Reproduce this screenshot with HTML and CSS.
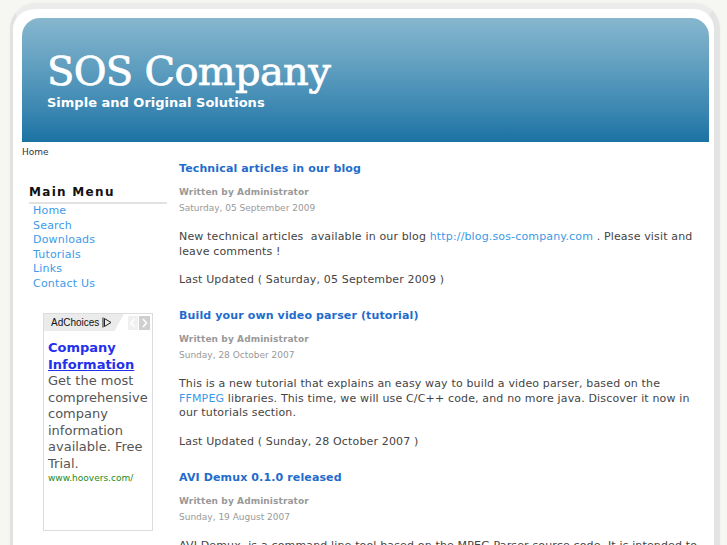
FILE: index.html
```html
<!DOCTYPE html>
<html lang="en">
<head>
<meta charset="utf-8">
<title>SOS Company</title>
<link rel="stylesheet" href="styles.css">
</head>
<body>
<div class="page">
  <div class="header">
    <div class="site-title">SOS Company</div>
    <div class="site-slogan">Simple and Original Solutions</div>
  </div>
  <div class="breadcrumb">Home</div>
  <div class="columns">
    <aside class="left">
      <div class="module">
        <h3 class="module-title">Main Menu</h3>
        <ul class="menu">
          <li><a href="#">Home</a></li>
          <li><a href="#">Search</a></li>
          <li><a href="#">Downloads</a></li>
          <li><a href="#">Tutorials</a></li>
          <li><a href="#">Links</a></li>
          <li><a href="#">Contact Us</a></li>
        </ul>
      </div>
      <div class="ad">
        <div class="ad-bar">
          <span class="adchoices">AdChoices
            <svg class="ad-icon" width="10" height="11" viewBox="0 0 10 11"><path d="M1 0.5v10M2.5 1.5l6.5 4-6.5 4z" fill="none" stroke="#222" stroke-width="1"/></svg>
          </span>
          <span class="ad-arrow ad-prev"><svg width="10" height="14" viewBox="0 0 10 14"><path d="M6.5 3L3 7l3.5 4" fill="none" stroke="#fff" stroke-width="1.6"/></svg></span>
          <span class="ad-arrow ad-next"><svg width="11" height="14" viewBox="0 0 11 14"><path d="M4 3l3.5 4L4 11" fill="none" stroke="#fff" stroke-width="1.6"/></svg></span>
        </div>
        <div class="ad-body">
          <a class="ad-link" href="#">Company <span class="ad-u">Information</span></a>
          <p class="ad-text">Get the most comprehensive company information available. Free Trial.</p>
          <div class="ad-url">www.hoovers.com/</div>
        </div>
      </div>
    </aside>
    <main class="main">
      <div class="article">
        <h2 class="article-title">Technical articles in our blog</h2>
        <div class="author">Written by Administrator</div>
        <div class="date">Saturday, 05 September 2009</div>
        <p class="text">New technical articles&nbsp; available in our blog <a href="#">http://blog.sos-company.com</a> . Please visit and leave comments !</p>
        <p class="updated">Last Updated ( Saturday, 05 September 2009 )</p>
      </div>
      <div class="article">
        <h2 class="article-title">Build your own video parser (tutorial)</h2>
        <div class="author">Written by Administrator</div>
        <div class="date">Sunday, 28 October 2007</div>
        <p class="text">This is a new tutorial that explains an easy way to build a video parser, based on the <a href="#">FFMPEG</a> libraries. This time, we will use C/C++ code, and no more java. Discover it now in our tutorials section.</p>
        <p class="updated">Last Updated ( Sunday, 28 October 2007 )</p>
      </div>
      <div class="article">
        <h2 class="article-title">AVI Demux 0.1.0 released</h2>
        <div class="author">Written by Administrator</div>
        <div class="date">Sunday, 19 August 2007</div>
        <p class="text">AVI Demux&nbsp; is a command line tool based on the MPEG Parser source code. It is intended to extract the audio and video streams of AVI files.</p>
        <p class="updated">Last Updated ( Sunday, 19 August 2007 )</p>
      </div>
    </main>
  </div>
</div>
</body>
</html>
```

FILE: styles.css
```css
html, body {
  margin: 0;
  padding: 0;
}
body {
  background: #f6f7f2;
  font-family: "DejaVu Sans", Verdana, sans-serif;
  color: #444;
  overflow: hidden;
}
.page {
  margin: 3px 7px 0 10px;
  border-top: 6px solid #ececec;
  border-left: 3px solid #e2e2e2;
  border-right: 6px solid #e4e4e4;
  border-radius: 26px 26px 0 0;
  background: #fff;
  padding: 9px 5px 40px 9px;
  box-shadow: 0 0 3px #eeeeea;
  min-height: 600px;
}
.header {
  height: 124px;
  box-sizing: border-box;
  padding: 30px 0 0 25px;
  border-radius: 18px 18px 0 0;
  background: linear-gradient(#87b7ce 0%, #5f9ebf 40%, #3a86b1 75%, #1b72a2 100%);
  color: #fff;
}
.site-title {
  font-family: "DejaVu Serif", serif;
  font-size: 40px;
  line-height: 46px;
  letter-spacing: -0.7px;
  -webkit-text-stroke: 0.7px #fff;
}
.site-slogan {
  font-weight: bold;
  font-size: 13px;
  line-height: 16px;
  margin-top: 1px;
}
.breadcrumb {
  margin-top: 4px;
  font-size: 9px;
  line-height: 12px;
  color: #333;
}
.columns {
  display: flex;
  align-items: flex-start;
}
.left {
  width: 157px;
  flex: none;
  box-sizing: border-box;
  padding: 27px 0 0 7px;
}
.module {
  width: 138px;
}
.module-title {
  margin: 0;
  font-size: 12px;
  line-height: 15px;
  font-weight: bold;
  letter-spacing: 1.3px;
  color: #111;
  padding-bottom: 2px;
  border-bottom: 2px solid #e2e2e2;
}
.menu {
  list-style: none;
  margin: 0;
  padding: 0 0 0 4px;
}
.menu li {
  font-size: 11px;
  line-height: 14.5px;
  letter-spacing: 0.2px;
}
.menu a {
  color: #3d9bea;
  text-decoration: none;
}
.ad {
  margin: 22px 0 0 14px;
  width: 108px;
  height: 216px;
  border: 1px solid #dcdcdc;
  background: #fff;
}
.ad-bar {
  display: flex;
  align-items: center;
  height: 17px;
}
.adchoices {
  display: flex;
  align-items: center;
  gap: 3px;
  height: 17px;
  width: 80px;
  box-sizing: border-box;
  padding-left: 7px;
  background: #ebebeb;
  clip-path: polygon(0 0, 100% 0, 88% 100%, 0 100%);
  font-family: "Liberation Sans", Arial, sans-serif;
  font-size: 10px;
  color: #111;
}
.ad-icon {
  display: block;
}
.ad-arrow {
  display: block;
  height: 14px;
}
.ad-arrow svg {
  display: block;
}
.ad-prev {
  margin-left: 4px;
  background: #f0f0f0;
}
.ad-next {
  margin-left: 1px;
  background: #cfcfcf;
}
.ad-body {
  padding: 9px 0 0 4px;
}
.ad-link {
  display: block;
  color: #2330ee;
  font-weight: bold;
  font-size: 13px;
  line-height: 16.5px;
  text-decoration: none;
}
.ad-u {
  text-decoration: underline;
}
.ad-text {
  margin: 0;
  font-size: 13px;
  line-height: 16.5px;
  color: #555;
}
.ad-url {
  font-size: 9px;
  line-height: 12px;
  color: #1b8a1b;
}
.main {
  width: 524px;
  flex: none;
  margin: 4px 0 0 0;
}
.article-title {
  margin: 0;
  font-size: 11px;
  line-height: 14px;
  font-weight: bold;
  color: #1f6ccc;
  letter-spacing: 0.13px;
}
.author {
  margin-top: 10px;
  font-size: 9px;
  line-height: 12px;
  font-weight: bold;
  color: #999;
  letter-spacing: 0.1px;
}
.date {
  margin-top: 4px;
  font-size: 9px;
  line-height: 12px;
  color: #999;
}
.text {
  margin: 16px 0 0 0;
  font-size: 11px;
  line-height: 14.5px;
  letter-spacing: 0.15px;
}
.text a {
  color: #3a9ae8;
  text-decoration: none;
}
.updated {
  margin: 14px 0 21.5px 0;
  font-size: 11px;
  line-height: 14.5px;
  letter-spacing: 0.15px;
}
```
